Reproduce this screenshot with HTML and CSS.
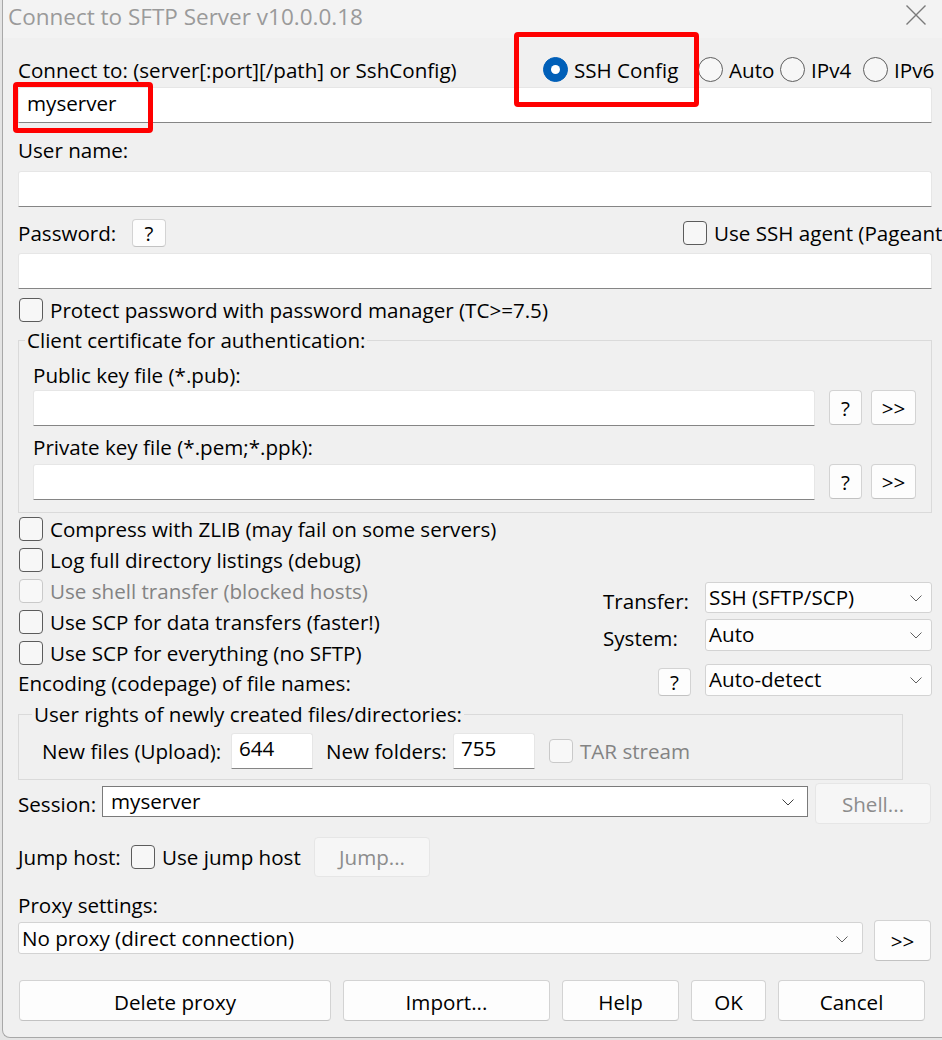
FILE: index.html
```html
<!DOCTYPE html>
<html lang="en">
<head>
<meta charset="utf-8">
<title>Connect to SFTP Server</title>
<link rel="stylesheet" href="styles.css">
</head>
<body>
<div class="window">
  <div class="titlebar">
    <span class="title">Connect to SFTP Server v10.0.0.18</span>
    <svg class="close" width="22" height="22" viewBox="0 0 22 22"><path d="M1.5 1.5 L20.5 20.5 M20.5 1.5 L1.5 20.5" stroke="#7a7a7a" stroke-width="1.4" fill="none"/></svg>
  </div>

  <div class="content">
    <div class="row head">
      <span class="lbl">Connect to: (server[:port][/path] or SshConfig)</span>
      <div class="radios">
        <span class="radio w-ssh"><span class="circle on"></span>SSH Config</span>
        <span class="radio w-auto"><span class="circle"></span>Auto</span>
        <span class="radio w-v4"><span class="circle"></span>IPv4</span>
        <span class="radio w-v6"><span class="circle"></span>IPv6</span>
      </div>
    </div>
    <div class="input host">myserver</div>

    <div class="lbl user-lbl">User name:</div>
    <div class="input user"></div>

    <div class="row pw">
      <span class="lbl pw-lbl">Password:</span>
      <span class="btn q">?</span>
      <span class="check agent"><span class="box"></span>Use SSH agent (Pageant)</span>
    </div>
    <div class="input pass"></div>

    <div class="check protect"><span class="box"></span>Protect password with password manager (TC&gt;=7.5)</div>

    <fieldset class="group cert">
      <legend>Client certificate for authentication:</legend>
      <div class="lbl key-lbl">Public key file (*.pub):</div>
      <div class="row file">
        <div class="input"></div>
        <span class="btn q">?</span>
        <span class="btn more">&gt;&gt;</span>
      </div>
      <div class="lbl key-lbl second">Private key file (*.pem;*.ppk):</div>
      <div class="row file second">
        <div class="input"></div>
        <span class="btn q">?</span>
        <span class="btn more">&gt;&gt;</span>
      </div>
    </fieldset>

    <div class="check line"><span class="box"></span>Compress with ZLIB (may fail on some servers)</div>
    <div class="check line"><span class="box"></span>Log full directory listings (debug)</div>

    <div class="options">
      <div class="opt-left">
        <div class="check line disabled"><span class="box"></span>Use shell transfer (blocked hosts)</div>
        <div class="check line"><span class="box"></span>Use SCP for data transfers (faster!)</div>
        <div class="check line"><span class="box"></span>Use SCP for everything (no SFTP)</div>
        <div class="lbl enc-lbl">Encoding (codepage) of file names:</div>
      </div>
      <div class="opt-right">
        <div class="pair transfer">
          <span class="lbl">Transfer:</span>
          <div class="select">SSH (SFTP/SCP)<svg class="chev" width="12" height="7" viewBox="0 0 12 7"><path d="M0.5 0.5 L6 6 L11.5 0.5" stroke="#606060" fill="none"/></svg></div>
        </div>
        <div class="pair system">
          <span class="lbl">System:</span>
          <div class="select">Auto<svg class="chev" width="12" height="7" viewBox="0 0 12 7"><path d="M0.5 0.5 L6 6 L11.5 0.5" stroke="#606060" fill="none"/></svg></div>
        </div>
        <div class="pair enc">
          <span class="btn q">?</span>
          <div class="select">Auto-detect<svg class="chev" width="12" height="7" viewBox="0 0 12 7"><path d="M0.5 0.5 L6 6 L11.5 0.5" stroke="#606060" fill="none"/></svg></div>
        </div>
      </div>
    </div>

    <fieldset class="group rights">
      <legend>User rights of newly created files/directories:</legend>
      <div class="row perms">
        <span class="lbl files-lbl">New files (Upload):</span>
        <div class="input mode">644</div>
        <span class="lbl folders-lbl">New folders:</span>
        <div class="input mode">755</div>
        <span class="check disabled tar"><span class="box"></span>TAR stream</span>
      </div>
    </fieldset>

    <div class="row session">
      <span class="lbl session-lbl">Session:</span>
      <div class="select combo">myserver<svg class="chev" width="12" height="7" viewBox="0 0 12 7"><path d="M0.5 0.5 L6 6 L11.5 0.5" stroke="#404040" fill="none"/></svg></div>
      <span class="btn off shell">Shell...</span>
    </div>

    <div class="row jump">
      <span class="lbl jump-lbl">Jump host:</span>
      <span class="check jump-check"><span class="box"></span>Use jump host</span>
      <span class="btn off jump-btn">Jump...</span>
    </div>

    <div class="lbl proxy-lbl">Proxy settings:</div>
    <div class="row proxy">
      <div class="select proxy-sel">No proxy (direct connection)<svg class="chev" width="12" height="7" viewBox="0 0 12 7"><path d="M0.5 0.5 L6 6 L11.5 0.5" stroke="#606060" fill="none"/></svg></div>
      <span class="btn proxy-more">&gt;&gt;</span>
    </div>

    <div class="row actions">
      <span class="btn act del">Delete proxy</span>
      <span class="btn act imp">Import...</span>
      <span class="btn act help">Help</span>
      <span class="btn act ok">OK</span>
      <span class="btn act cancel">Cancel</span>
    </div>
  </div>

  <div class="mark mark-host"></div>
  <div class="mark mark-mode"></div>
</div>
</body>
</html>
```

FILE: styles.css
```css
* { box-sizing: border-box; }

html, body {
  margin: 0;
  padding: 0;
  width: 942px;
  height: 1040px;
  overflow: hidden;
  background: #e4e4e4;
}

body {
  font-family: "Open Sans", "Noto Sans", sans-serif;
  font-size: 20.6px;
  color: #000;
}

/* dialog frame */
.window {
  position: relative;
  margin-left: 2px;
  width: 940px;
  height: 1038px;
  background: #f0f0f0;
  border-left: 1px solid #a8a8a8;
  border-bottom: 1px solid #a8a8a8;
  border-bottom-left-radius: 8px;
  overflow: hidden;
}

.titlebar {
  height: 38px;
  background: #f3f3f3;
  display: flex;
  justify-content: space-between;
  align-items: flex-start;
  padding: 0 15px 0 5px;
}

.title {
  font-size: 22.5px;
  line-height: 34px;
  color: #9a9a9a;
}

.close { margin-top: 4px; }

.content {
  padding: 18px 10px 0 15px;
}

.row { display: flex; align-items: center; }

.lbl { line-height: 26px; white-space: nowrap; }

/* connect row with address family radios */
.head { height: 27px; justify-content: space-between; }

.radios { display: flex; align-items: center; }

.radio {
  display: flex;
  align-items: center;
  white-space: nowrap;
  line-height: 26px;
}
.w-ssh { width: 155px; }
.w-auto { width: 82px; }
.w-v4 { width: 83px; }
.w-v6 { width: 69px; }

.circle {
  flex: none;
  width: 25px;
  height: 25px;
  border: 1px solid #5e5e5e;
  border-radius: 50%;
  background: #f7f7f7;
  margin-right: 6px;
  position: relative;
}
.circle.on {
  background: #005fb8;
  border-color: #005fb8;
}
.circle.on::after {
  content: "";
  position: absolute;
  left: 7px;
  top: 7px;
  width: 9px;
  height: 9px;
  border-radius: 50%;
  background: #fff;
}

/* text fields */
.input {
  height: 36px;
  background: #fff;
  border: 1px solid #e6e6e6;
  border-bottom-color: #858585;
  border-radius: 3px 3px 0 0;
  padding-left: 8px;
  line-height: 30px;
  white-space: nowrap;
}
.host { margin-top: 4px; }
.user-lbl { margin-top: 14px; }
.user { margin-top: 8px; }

.pw { margin-top: 12px; height: 28px; }
.pw-lbl { width: 114px; }
.pass { margin-top: 6px; }

/* buttons */
.btn {
  display: inline-flex;
  align-items: center;
  justify-content: center;
  flex: none;
  background: #fdfdfd;
  border: 1px solid #d3d3d3;
  border-bottom-color: #c2c2c2;
  border-radius: 4px;
  white-space: nowrap;
}
.btn.off {
  background: #f6f6f6;
  border-color: #e6e6e6;
  color: #8c8c8c;
}
.q { width: 34px; height: 28px; }
.more { width: 46px; height: 36px; }

/* check boxes */
.check {
  display: flex;
  align-items: center;
  white-space: nowrap;
  line-height: 26px;
}
.box {
  flex: none;
  width: 24px;
  height: 24px;
  border: 1px solid #5c5c5c;
  border-radius: 4px;
  background: #f7f7f7;
  margin-right: 7px;
}
.check.disabled { color: #838383; }
.check.disabled .box { border-color: #c9c9c9; background: #f8f8f8; }

.agent { margin-left: auto; width: 249px; }
.protect { margin-top: 7px; height: 28px; padding-left: 1px; }
.line { height: 31px; padding-left: 1px; }

/* group boxes */
.group {
  margin: 0;
  min-width: 0;
  border: 1px solid #dadada;
}
.group legend {
  padding: 0 2px;
  line-height: 26px;
  white-space: nowrap;
}

.cert {
  margin-top: 3px;
  padding: 9px 15px 12px 14px;
}
.cert legend { margin-left: -8px; }
.key-lbl.second { margin-top: 8px; }
.file { margin-top: 2px; align-items: flex-start; }
.file.second { margin-top: 4px; }
.file .input { flex: 1; }
.file .q { margin-left: 14px; height: 35px; width: 33px; }
.file .more { margin-left: 9px; height: 35px; width: 45px; }

/* transfer options */
.options { display: flex; align-items: flex-start; }
.opt-left { flex: 1; }
.enc-lbl { height: 30px; line-height: 30px; }
.opt-right { width: 329px; padding-top: 5px; }

.pair { display: flex; align-items: center; }
.pair .lbl { flex: 1; padding-top: 8px; }
.pair.system { margin-top: 5px; }
.pair.system .lbl { padding-top: 5px; }
.pair.enc { margin-top: 13px; justify-content: flex-end; }
.pair.enc .q { width: 33px; height: 28px; margin-right: 14px; margin-top: 3px; }

.select {
  position: relative;
  width: 227px;
  height: 32px;
  background: #fdfdfd;
  border: 1px solid #d3d3d3;
  border-radius: 3px;
  padding-left: 3px;
  line-height: 29px;
  white-space: nowrap;
}
.transfer .select { height: 31px; }
.chev {
  position: absolute;
  right: 9px;
  top: 12px;
}

.rights {
  margin-top: 3px;
  width: 885px;
  padding: 6px 10px 10px 13px;
}
.perms { padding-left: 10px; }
.files-lbl { width: 189px; }
.mode { width: 82px; line-height: 28px; padding-left: 7px; }
.folders-lbl { margin-left: 13px; width: 127px; }
.tar { margin-left: 14px; }

.session { margin-top: 3px; height: 41px; padding-right: 1px; }
.session-lbl { width: 84px; }
.combo {
  flex: 1;
  width: auto;
  height: 31px;
  background: #fff;
  border-color: #7a7a7a;
  border-radius: 0;
  padding-left: 8px;
  margin-top: 3px;
  align-self: flex-start;
}
.combo .chev { right: 13px; }
.shell { width: 116px; height: 41px; margin-left: 7px; }

.jump { margin-top: 13px; height: 40px; }
.jump-lbl { width: 113px; }
.jump-check { width: 183px; }
.jump-btn { width: 116px; height: 40px; }

.proxy-lbl { margin-top: 15px; }
.proxy { margin-top: 2px; align-items: flex-start; padding-right: 1px; }
.proxy-sel { flex: 1; width: auto; margin-top: 2px; line-height: 31px; }
.proxy-sel .chev { right: 14px; top: 13px; }
.proxy-more { width: 57px; height: 41px; margin-left: 11px; }

.actions { margin-top: 19px; padding-left: 1px; gap: 12px; }
.act { height: 41px; padding-top: 2px; }
.del { width: 312px; }
.imp { width: 207px; }
.help { width: 117px; }
.ok { width: 75px; }
.cancel { width: 147px; }

/* red highlight frames drawn on top of the form */
.mark {
  position: absolute;
  border: 5px solid #ff0000;
  border-radius: 4px;
  pointer-events: none;
}
.mark-host { left: 10px; top: 82px; width: 140px; height: 51px; }
.mark-mode { left: 511px; top: 32px; width: 185px; height: 75px; }
```
